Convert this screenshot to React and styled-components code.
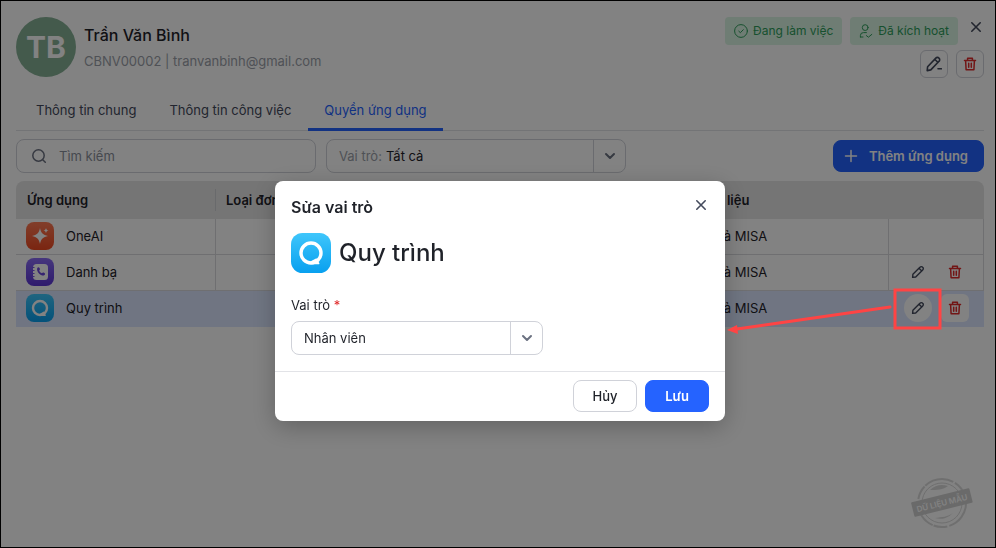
import { useState } from "react";
import styled, { createGlobalStyle, css } from "styled-components";

const GlobalStyle = createGlobalStyle`
  * {
    box-sizing: border-box;
  }
  body {
    margin: 0;
    background-color: #ffffff;
    color: #1f2229;
    font-family: Inter, "Liberation Sans", sans-serif;
    font-size: 13px;
    line-height: 20px;
  }
  button,
  input,
  select {
    font: inherit;
    color: inherit;
  }
`;

const Page = styled.main`
  position: relative;
  min-height: 100vh;
  padding: 16px 11px 0 15px;
  border: 1px solid #000000;
`;
const Header = styled.header`
  display: flex;
  align-items: flex-start;
  gap: 8px;
  height: 76px;
`;
const Avatar = styled.div`
  flex: none;
  width: 60px;
  height: 60px;
  border-radius: 50%;
  background-color: #86b096;
  color: #ffffff;
  font-size: 30px;
  font-weight: 700;
  line-height: 60px;
  text-align: center;
`;
const Info = styled.div`
  flex: 1;
  padding-top: 6px;
`;
const Name = styled.h1`
  margin: 0 0 4px;
  font-size: 16px;
  font-weight: 500;
  line-height: 24px;
`;
const Contact = styled.div`
  color: #9b9fa9;
`;
const HeaderSide = styled.div`
  display: flex;
  flex-direction: column;
  align-items: flex-end;
  gap: 5px;
`;
const SideRow = styled.div`
  display: flex;
  gap: 8px;
`;
const StatusRow = styled(SideRow)`
  margin-right: -2px;
`;
const Status = styled.span`
  display: flex;
  align-items: center;
  gap: 5px;
  height: 28px;
  padding: 0 9px;
  border-radius: 4px;
  background-color: #d9f5e3;
  color: #2e9e5b;
  font-size: 12px;
`;
const IconButton = styled.button`
  display: inline-flex;
  align-items: center;
  justify-content: center;
  width: 28px;
  height: 28px;
  padding: 0;
  border: 1px solid ${(props) => (props.$outlined ? "#d0d2d9" : "transparent")};
  border-radius: ${(props) => (props.$round ? "50%" : "6px")};
  background-color: ${(props) => (props.$filled ? "#ffffff" : "transparent")};
  color: ${(props) => (props.$danger ? "#e02b2b" : "#434a5c")};
`;
const CloseButton = styled(IconButton)`
  width: 20px;
  height: 20px;
`;

const Tabs = styled.nav`
  display: flex;
  gap: 1px;
  height: 38px;
  padding-left: 4px;
  border-bottom: 1px solid #e2e3e7;
`;
const Tab = styled.button`
  height: 38px;
  padding: 0 16px 1px;
  border: 0;
  border-bottom: 3px solid transparent;
  background: none;
  color: #434a5c;
  ${(props) =>
    props.$active &&
    css`
      border-color: #2563ff;
      color: #2563ff;
    `}
`;

const Toolbar = styled.div`
  display: flex;
  align-items: center;
  gap: 10px;
  margin: 8px 0;
`;
const SearchBox = styled.label`
  display: flex;
  align-items: center;
  gap: 12px;
  width: 300px;
  height: 34px;
  padding: 0 14px;
  border: 1px solid #d0d2d9;
  border-radius: 8px;
  color: #6b7180;
  input {
    flex: 1;
    min-width: 0;
    padding: 0;
    border: 0;
    outline: 0;
    background: none;
  }
  input::placeholder {
    color: #8a8f9b;
    opacity: 1;
  }
`;
const SelectBox = styled.div`
  display: flex;
  align-items: center;
  position: relative;
  width: ${(props) => props.$width}px;
  height: 34px;
  padding-left: 12px;
  border: 1px solid #d0d2d9;
  border-radius: 8px;
  label {
    margin-right: 4px;
    color: #9b9fa9;
  }
  select {
    flex: 1;
    height: 32px;
    padding: 0;
    border: 0;
    outline: 0;
    appearance: none;
    background: none;
  }
`;
const Arrow = styled.span`
  display: flex;
  align-items: center;
  justify-content: center;
  width: 32px;
  height: 32px;
  border-left: 1px solid #d0d2d9;
  color: #6b7180;
  pointer-events: none;
`;
const Button = styled.button`
  display: inline-flex;
  align-items: center;
  justify-content: center;
  gap: 12px;
  min-width: 64px;
  height: 32px;
  padding: 0 12px;
  border: 1px solid ${(props) => (props.$primary ? "#2563ff" : "#d0d2d9")};
  border-radius: 8px;
  background-color: ${(props) => (props.$primary ? "#2563ff" : "#ffffff")};
  color: ${(props) => (props.$primary ? "#ffffff" : "#1f2229")};
  font-weight: ${(props) => (props.$primary ? 600 : 500)};
`;
const AddButton = styled(Button)`
  margin-left: auto;
  padding: 0 15px 0 10px;
  gap: 11px;
`;

const Table = styled.table`
  width: 100%;
  border-collapse: separate;
  border-spacing: 0;
  table-layout: fixed;
`;
const HeadCell = styled.th`
  position: relative;
  width: ${(props) => props.$width};
  height: 38px;
  padding: 0 10px;
  background-color: #e6e6e6;
  font-weight: 600;
  text-align: left;
  &:first-child {
    padding-left: 11px;
    border-top-left-radius: 8px;
  }
  &:last-child {
    border-top-right-radius: 8px;
  }
  &:first-child::after {
    content: "";
    position: absolute;
    top: 8px;
    right: 0;
    width: 1px;
    height: 22px;
    background-color: #cfd0d4;
  }
`;
const Row = styled.tr`
  background-color: ${(props) => (props.$selected ? "#dbe6ff" : "transparent")};
`;
const Cell = styled.td`
  height: 36px;
  padding: 0 10px 2px;
  border-right: ${(props) => (props.$line ? "1px solid #d9dade" : "0")};
  border-bottom: 1px solid #d9dade;
  ${(props) =>
    props.$selected &&
    css`
      border-color: #dbe6ff;
    `}
`;
const AppName = styled.div`
  display: flex;
  align-items: center;
  gap: 12px;
`;
const Actions = styled.div`
  display: flex;
  gap: 9px;
  padding-left: 5px;
`;

const Overlay = styled.div`
  position: fixed;
  inset: 1px;
  display: flex;
  align-items: flex-start;
  justify-content: center;
  padding: 180px 0 0 4px;
  background-color: rgba(0, 0, 0, 0.49);
`;
const Modal = styled.section`
  width: 450px;
  border-radius: 8px;
  background-color: #ffffff;
  box-shadow: 0 6px 24px rgba(0, 0, 0, 0.25);
`;
const ModalHead = styled.div`
  display: flex;
  justify-content: space-between;
  padding: 14px 14px 0 16px;
  h2 {
    margin: 0;
    font-size: 16px;
    font-weight: 600;
    line-height: 24px;
  }
`;
const ModalBody = styled.div`
  padding: 14px 16px 16px;
`;
const AppTitle = styled.div`
  display: flex;
  align-items: center;
  gap: 8px;
  margin-bottom: 22px;
  font-size: 24px;
  font-weight: 500;
  line-height: 32px;
`;
const FieldLabel = styled.label`
  display: block;
  margin-bottom: 6px;
  span {
    color: #e02b2b;
  }
`;
const ModalFoot = styled.div`
  display: flex;
  justify-content: flex-end;
  gap: 8px;
  padding: 8px 16px 9px;
  border-top: 1px solid #e2e3e7;
`;

const Stamp = styled.svg`
  position: absolute;
  right: 20px;
  bottom: 14px;
`;
const Callout = styled.svg`
  position: absolute;
  top: 285px;
  right: 52px;
`;

const strokeProps = {
  fill: "none",
  stroke: "currentColor",
  strokeLinecap: "round",
  strokeLinejoin: "round",
};

const CloseIcon = () => (
  <svg width="12" height="12" viewBox="0 0 12 12" {...strokeProps} strokeWidth="1.6">
    <path d="M1.800 1.800l8.400 8.400M10.200 1.800l-8.400 8.400" />
  </svg>
);
const ChevronIcon = () => (
  <svg width="12" height="12" viewBox="0 0 12 12" {...strokeProps} strokeWidth="2">
    <path d="M2 4l4 4 4-4" />
  </svg>
);
const SearchIcon = () => (
  <svg width="16" height="16" viewBox="0 0 16 16" {...strokeProps} strokeWidth="1.5">
    <circle cx="7.5" cy="7.5" r="5.7" />
    <path d="M11.700 11.700l2.600 2.600" />
  </svg>
);
const PlusIcon = () => (
  <svg width="14" height="14" viewBox="0 0 14 14" {...strokeProps} strokeWidth="1.5">
    <path d="M7 1.5v11M1.5 7h11" />
  </svg>
);
const PencilIcon = () => (
  <svg width="14" height="14" viewBox="0 0 14 14" {...strokeProps} strokeWidth="1.4">
    <path d="M1.6 12.4l.3-3.2 7-7a1.9 1.9 0 0 1 2.8 0 1.9 1.9 0 0 1 0 2.8l-7 7zM8 3.2L10.8 6" />
  </svg>
);
const EditIcon = () => (
  <svg width="16" height="16" viewBox="0 0 16 16" {...strokeProps} strokeWidth="1.6">
    <path d="M1.2 14.6l.4-3.8 8.2-8.7a2.2 2.2 0 0 1 3.2 0 2.2 2.2 0 0 1 0 3.2l-8.2 8.6zM8.8 3.3L12 6.5M12 12.8h3.4" />
  </svg>
);
const TrashIcon = () => (
  <svg width="14" height="16" viewBox="0 0 14 16" {...strokeProps} strokeWidth="1.5">
    <path d="M1.5 4.500h11M4.600 4.500V2.200h4.800v2.300M2.600 4.500l.5 9.300h7.800l.5-9.300M5.700 7.200v4M8.300 7.200v4" />
  </svg>
);
const CheckCircleIcon = () => (
  <svg width="14" height="14" viewBox="0 0 14 14" {...strokeProps} strokeWidth="1">
    <circle cx="7" cy="7" r="6.4" />
    <path d="M4.8 7.2l1.6 1.5 2.9-3" />
  </svg>
);
const UserCheckIcon = () => (
  <svg width="14" height="14" viewBox="0 0 14 14" {...strokeProps} strokeWidth="1">
    <circle cx="6.2" cy="3.6" r="2.9" />
    <path d="M1.4 13V11.6a3 3 0 0 1 3-3h3M1.4 13H4M7.4 11.6l2 1.6 3.4-2.8" />
  </svg>
);

const gradients = {
  ai: ["#ff7a55", "#f04a22"],
  contact: ["#8a6cf5", "#5b35d5"],
  process: ["#3fc6fb", "#08a0ef"],
};

const AppIcon = ({ type, size = 28, id = type }) => (
  <svg width={size} height={size} viewBox="0 0 28 28">
    <defs>
      <linearGradient id={id} x1="0" y1="0" x2="0" y2="1">
        <stop offset="0" stopColor={gradients[type][0]} />
        <stop offset="1" stopColor={gradients[type][1]} />
      </linearGradient>
    </defs>
    <rect width="28" height="28" rx="8" fill={`url(#${id})`} />
    {type === "ai" && (
      <g fill="#ffffff">
        <path d="M14 6c1 5 3 7 8 8-5 1-7 3-8 8-1-5-3-7-8-8 5-1 7-3 8-8z" />
        <path d="M20 6c.4 1.7 1 2.2 2.6 2.6-1.6.4-2.2 1-2.6 2.6-.4-1.6-1-2.2-2.6-2.6C19 8.2 19.6 7.7 20 6z" />
      </g>
    )}
    {type === "contact" && (
      <>
        <rect x="7" y="6" width="15" height="16" rx="3.5" fill="#ffffff" />
        <path d="M6 9.5h2.500M6 12.500h2.500M6 15.500h2.500M6 18.500h2.500" stroke="#7652e4" strokeWidth="1.2" />
        <path d="M11.400 9.800c.8-1 1.700-.8 2.300.4.5 1 .2 1.600-.5 2.200.5 1.400 1.300 2.200 2.700 2.800.7-.8 1.300-.9 2.200-.4 1.100.6 1.300 1.500.4 2.300-1.200 1-3.500.5-5.300-1.300-1.900-1.900-2.700-4.600-1.800-6z" fill="#6a45dd" />
      </>
    )}
    {type === "process" && (
      <>
        <circle cx="14" cy="14" r="7" fill="none" stroke="#ffffff" strokeWidth="2.4" />
        <path d="M13.500 20l4.300-2.400 2 3.400c.3.500 0 .9-.6.9-2.200 0-4.200.1-5.700-.2z" fill="#ffffff" />
      </>
    )}
  </svg>
);

const tabs = ["Thông tin chung", "Thông tin công việc", "Quyền ứng dụng"];
const apps = [
  { name: "OneAI", type: "ai", editable: false },
  { name: "Danh bạ", type: "contact", editable: true },
  { name: "Quy trình", type: "process", editable: true, selected: true },
];

const EditRoleModal = ({ onClose }) => (
  <Overlay>
    <Modal role="dialog" aria-labelledby="modal-title">
      <ModalHead>
        <h2 id="modal-title">Sửa vai trò</h2>
        <CloseButton type="button" onClick={onClose}>
          <CloseIcon />
        </CloseButton>
      </ModalHead>
      <ModalBody>
        <AppTitle>
          <AppIcon type="process" size={40} id="process-large" />
          Quy trình
        </AppTitle>
        <FieldLabel htmlFor="role">
          Vai trò <span>*</span>
        </FieldLabel>
        <SelectBox $width={252}>
          <select id="role">
            <option>Nhân viên</option>
          </select>
          <Arrow>
            <ChevronIcon />
          </Arrow>
        </SelectBox>
      </ModalBody>
      <ModalFoot>
        <Button type="button" onClick={onClose}>
          Hủy
        </Button>
        <Button type="button" $primary onClick={onClose}>
          Lưu
        </Button>
      </ModalFoot>
    </Modal>
  </Overlay>
);

const App = () => {
  const [open, setOpen] = useState(true);

  return (
    <>
      <GlobalStyle />
      <Page>
        <Header>
          <Avatar>TB</Avatar>
          <Info>
            <Name>Trần Văn Bình</Name>
            <Contact>CBNV00002 | tranvanbinh@gmail.com</Contact>
          </Info>
          <HeaderSide>
            <StatusRow>
              <Status>
                <CheckCircleIcon />
                Đang làm việc
              </Status>
              <Status>
                <UserCheckIcon />
                Đã kích hoạt
              </Status>
              <CloseButton type="button">
                <CloseIcon />
              </CloseButton>
            </StatusRow>
            <SideRow>
              <IconButton type="button" $outlined>
                <EditIcon />
              </IconButton>
              <IconButton type="button" $outlined $danger>
                <TrashIcon />
              </IconButton>
            </SideRow>
          </HeaderSide>
        </Header>

        <Tabs>
          {tabs.map((tab, index) => (
            <Tab key={tab} type="button" $active={index === 2}>
              {tab}
            </Tab>
          ))}
        </Tabs>

        <Toolbar>
          <SearchBox>
            <SearchIcon />
            <input type="text" placeholder="Tìm kiếm" />
          </SearchBox>
          <SelectBox $width={300}>
            <label htmlFor="filter">Vai trò:</label>
            <select id="filter">
              <option>Tất cả</option>
            </select>
            <Arrow>
              <ChevronIcon />
            </Arrow>
          </SelectBox>
          <AddButton type="button" $primary>
            <PlusIcon />
            Thêm ứng dụng
          </AddButton>
        </Toolbar>

        <Table>
          <thead>
            <tr>
              <HeadCell $width="200px">Ứng dụng</HeadCell>
              <HeadCell>Loại đơn vị</HeadCell>
              <HeadCell $width="245px">Phạm vi dữ liệu</HeadCell>
              <HeadCell $width="95px" />
            </tr>
          </thead>
          <tbody>
            {apps.map(({ name, type, editable, selected }) => (
              <Row key={name} $selected={selected}>
                <Cell $line $selected={selected}>
                  <AppName>
                    <AppIcon type={type} />
                    {name}
                  </AppName>
                </Cell>
                <Cell $selected={selected} />
                <Cell $line $selected={selected}>
                  Thuộc tất cả MISA
                </Cell>
                <Cell $line $selected={selected}>
                  {editable && (
                    <Actions>
                      <IconButton
                        type="button"
                        $round
                        $filled={selected}
                        onClick={() => setOpen(true)}
                      >
                        <PencilIcon />
                      </IconButton>
                      <IconButton type="button" $danger $filled={selected}>
                        <TrashIcon />
                      </IconButton>
                    </Actions>
                  )}
                </Cell>
              </Row>
            ))}
          </tbody>
        </Table>

        <Stamp width="66" height="60" viewBox="0 0 66 60">
          <g fill="none" stroke="#dadada" strokeWidth="2">
            <circle cx="33" cy="30" r="24" strokeDasharray="30 2 14 1" />
            <circle cx="33" cy="30" r="20" strokeWidth="1" />
          </g>
          <path d="M21 17a18 18 0 0 1 18-4c-5 4-11 4-18 4zM26 45c7-1 13-1 18-5a17 17 0 0 1-18 5z" fill="#dadada" />
          <g transform="rotate(-14 33 30)">
            <rect x="3" y="22" width="60" height="15" rx="1" fill="#d0d0d0" />
            <text x="33" y="33" fill="#ffffff" fontSize="8" fontWeight="600" textAnchor="middle">
              DỮ LIỆU MẪU
            </text>
          </g>
        </Stamp>

        {open && <EditRoleModal onClose={() => setOpen(false)} />}
        <Callout width="216" height="48" viewBox="0 0 216 48">
          <g fill="none" stroke="#ff4444" strokeWidth="3">
            <rect x="168" y="4" width="45" height="38" />
            <path d="M163 21L10 43" strokeLinecap="round" />
          </g>
          <path d="M0 44l10-5 1 9z" fill="#ff4444" />
        </Callout>
      </Page>
    </>
  );
};

export default App;
